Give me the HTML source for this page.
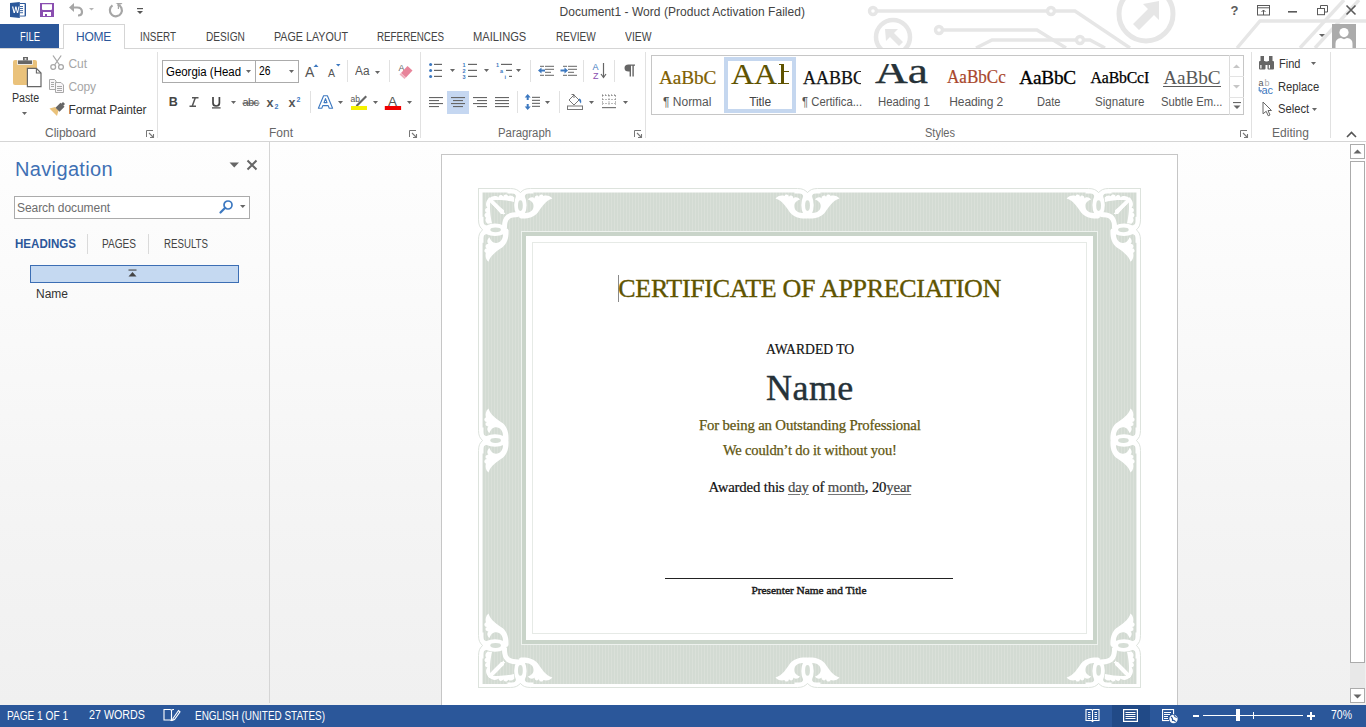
<!DOCTYPE html>
<html><head><meta charset="utf-8"><style>
html,body{margin:0;padding:0;}
body{width:1366px;height:727px;position:relative;overflow:hidden;background:#fff;font-family:"Liberation Sans", sans-serif;}
.t{position:absolute;line-height:1;white-space:nowrap;}
svg{overflow:visible}
</style></head><body>
<div style="position:absolute;left:0px;top:142px;width:1366px;height:563px;background:linear-gradient(#fefefe 0px,#f9f9f9 200px,#f4f4f4 380px,#f0f0f0 563px);"></div>
<div style="position:absolute;left:0px;top:141px;width:1366px;height:1px;background:#d5d5d5;"></div>
<div style="position:absolute;left:269px;top:142px;width:1px;height:561px;background:#d5d5d5;"></div>
<div style="position:absolute;left:441px;top:154px;width:737px;height:560px;background:#fff;border:1px solid #c6c6c6;box-sizing:border-box;"></div>
<svg style="position:absolute;left:0px;top:0px;" width="1366" height="727" viewBox="0 0 1366 727"><defs><pattern id="stripe" width="3" height="10" patternUnits="userSpaceOnUse"><rect width="3" height="10" fill="#d3dbd3"/><rect x="2" width="1" height="10" fill="#dae0d9"/></pattern></defs>
<rect x="478.5" y="188.5" width="662" height="499" fill="#fff" stroke="#dde3dd" stroke-width="1"/>
<rect x="482.5" y="192.5" width="654" height="491.5" fill="url(#stripe)"/>
<rect x="521" y="231" width="577" height="414" fill="#eef2ee"/>
<rect x="522" y="232" width="575" height="412" fill="#c9d4c9"/>
<rect x="526" y="236" width="567" height="404" fill="#fff"/>
<rect x="532.5" y="242.5" width="554" height="391" fill="none" stroke="#e6eae6" stroke-width="1"/>
<path transform="matrix(1,0,0,1,482.5,192.5)" d="M 36 22 C 27 22 21.5 24 22 36" fill="none" stroke="#fff" stroke-width="5"/><path transform="matrix(-1,0,0,1,1136.5,192.5)" d="M 36 22 C 27 22 21.5 24 22 36" fill="none" stroke="#fff" stroke-width="5"/><path transform="matrix(1,0,0,-1,482.5,684)" d="M 36 22 C 27 22 21.5 24 22 36" fill="none" stroke="#fff" stroke-width="5"/><path transform="matrix(-1,0,0,-1,1136.5,684)" d="M 36 22 C 27 22 21.5 24 22 36" fill="none" stroke="#fff" stroke-width="5"/><g transform="matrix(1,0,0,1,520.4,193)"><rect x="-13" y="-5" width="26" height="5.5" fill="#fff"/><path d="M -14 -4.5 L -10 -4.5 Q -3 -4.5 0 -0.3 Q 3 -4.5 10 -4.5 L 14 -4.5" fill="none" stroke="#dde3dd" stroke-width="1"/><path d="M -6 4.5 C -8 2.3 -10.5 1.8 -12 3.3 C -13.5 0.9 -16.5 0.9 -17 3.8 C -18.5 1.3 -21.5 1.6 -22 4.5 C -24 2.2 -28.5 2.5 -32.5 6.5 C -30.5 9.5 -24.5 14.5 -19.5 21 L -15 21 C -19 15.5 -23.5 10.5 -27.5 7.3 C -22 6.8 -14 7.2 -6.5 9 Z" fill="#fff"/><path d="M -32 5.5 C -30 2.8 -26 2 -23 3 C -22.5 0.8 -19 0.6 -18.5 4 C -17.8 1.8 -14.2 2 -14 5.5 C -13 3.8 -9.5 3.8 -7.5 6.5 C -10.8 7.8 -13.2 9.5 -13.2 13 C -13.2 17.5 -9.5 19.8 -5 20 L 0 20 L 0 25.5 C -7 26 -13.5 24.5 -17.5 19.5 C -21 14.5 -25 7.5 -32 5.5 Z" fill="#fff" transform="scale(-1,1)"/><rect x="-1" y="18" width="2" height="7" fill="#fff"/><ellipse cx="0" cy="12" rx="6.2" ry="12" fill="#fff"/><ellipse cx="0" cy="12.6" rx="2.4" ry="5.3" fill="#d6ded6"/><path d="M -9 0 Q -5 0 -4 4 L 4 4 Q 5 0 9 0 Z" fill="#fff"/></g><g transform="matrix(1,0,0,1,807.5,193)"><rect x="-13" y="-5" width="26" height="5.5" fill="#fff"/><path d="M -14 -4.5 L -10 -4.5 Q -3 -4.5 0 -0.3 Q 3 -4.5 10 -4.5 L 14 -4.5" fill="none" stroke="#dde3dd" stroke-width="1"/><path d="M -32 5.5 C -30 2.8 -26 2 -23 3 C -22.5 0.8 -19 0.6 -18.5 4 C -17.8 1.8 -14.2 2 -14 5.5 C -13 3.8 -9.5 3.8 -7.5 6.5 C -10.8 7.8 -13.2 9.5 -13.2 13 C -13.2 17.5 -9.5 19.8 -5 20 L 0 20 L 0 25.5 C -7 26 -13.5 24.5 -17.5 19.5 C -21 14.5 -25 7.5 -32 5.5 Z" fill="#fff"/><path d="M -32 5.5 C -30 2.8 -26 2 -23 3 C -22.5 0.8 -19 0.6 -18.5 4 C -17.8 1.8 -14.2 2 -14 5.5 C -13 3.8 -9.5 3.8 -7.5 6.5 C -10.8 7.8 -13.2 9.5 -13.2 13 C -13.2 17.5 -9.5 19.8 -5 20 L 0 20 L 0 25.5 C -7 26 -13.5 24.5 -17.5 19.5 C -21 14.5 -25 7.5 -32 5.5 Z" fill="#fff" transform="scale(-1,1)"/><rect x="-1" y="18" width="2" height="7" fill="#fff"/><ellipse cx="0" cy="12" rx="6.2" ry="12" fill="#fff"/><ellipse cx="0" cy="12.6" rx="2.4" ry="5.3" fill="#d6ded6"/><path d="M -9 0 Q -5 0 -4 4 L 4 4 Q 5 0 9 0 Z" fill="#fff"/></g><g transform="matrix(1,0,0,1,1098.6,193)"><rect x="-13" y="-5" width="26" height="5.5" fill="#fff"/><path d="M -14 -4.5 L -10 -4.5 Q -3 -4.5 0 -0.3 Q 3 -4.5 10 -4.5 L 14 -4.5" fill="none" stroke="#dde3dd" stroke-width="1"/><path d="M -32 5.5 C -30 2.8 -26 2 -23 3 C -22.5 0.8 -19 0.6 -18.5 4 C -17.8 1.8 -14.2 2 -14 5.5 C -13 3.8 -9.5 3.8 -7.5 6.5 C -10.8 7.8 -13.2 9.5 -13.2 13 C -13.2 17.5 -9.5 19.8 -5 20 L 0 20 L 0 25.5 C -7 26 -13.5 24.5 -17.5 19.5 C -21 14.5 -25 7.5 -32 5.5 Z" fill="#fff"/><path d="M -6 4.5 C -8 2.3 -10.5 1.8 -12 3.3 C -13.5 0.9 -16.5 0.9 -17 3.8 C -18.5 1.3 -21.5 1.6 -22 4.5 C -24 2.2 -28.5 2.5 -32.5 6.5 C -30.5 9.5 -24.5 14.5 -19.5 21 L -15 21 C -19 15.5 -23.5 10.5 -27.5 7.3 C -22 6.8 -14 7.2 -6.5 9 Z" fill="#fff" transform="scale(-1,1)"/><rect x="-1" y="18" width="2" height="7" fill="#fff"/><ellipse cx="0" cy="12" rx="6.2" ry="12" fill="#fff"/><ellipse cx="0" cy="12.6" rx="2.4" ry="5.3" fill="#d6ded6"/><path d="M -9 0 Q -5 0 -4 4 L 4 4 Q 5 0 9 0 Z" fill="#fff"/></g><g transform="matrix(1,0,0,-1,520.4,683)"><rect x="-13" y="-5" width="26" height="5.5" fill="#fff"/><path d="M -14 -4.5 L -10 -4.5 Q -3 -4.5 0 -0.3 Q 3 -4.5 10 -4.5 L 14 -4.5" fill="none" stroke="#dde3dd" stroke-width="1"/><path d="M -6 4.5 C -8 2.3 -10.5 1.8 -12 3.3 C -13.5 0.9 -16.5 0.9 -17 3.8 C -18.5 1.3 -21.5 1.6 -22 4.5 C -24 2.2 -28.5 2.5 -32.5 6.5 C -30.5 9.5 -24.5 14.5 -19.5 21 L -15 21 C -19 15.5 -23.5 10.5 -27.5 7.3 C -22 6.8 -14 7.2 -6.5 9 Z" fill="#fff"/><path d="M -32 5.5 C -30 2.8 -26 2 -23 3 C -22.5 0.8 -19 0.6 -18.5 4 C -17.8 1.8 -14.2 2 -14 5.5 C -13 3.8 -9.5 3.8 -7.5 6.5 C -10.8 7.8 -13.2 9.5 -13.2 13 C -13.2 17.5 -9.5 19.8 -5 20 L 0 20 L 0 25.5 C -7 26 -13.5 24.5 -17.5 19.5 C -21 14.5 -25 7.5 -32 5.5 Z" fill="#fff" transform="scale(-1,1)"/><rect x="-1" y="18" width="2" height="7" fill="#fff"/><ellipse cx="0" cy="12" rx="6.2" ry="12" fill="#fff"/><ellipse cx="0" cy="12.6" rx="2.4" ry="5.3" fill="#d6ded6"/><path d="M -9 0 Q -5 0 -4 4 L 4 4 Q 5 0 9 0 Z" fill="#fff"/></g><g transform="matrix(1,0,0,-1,807.5,683)"><rect x="-13" y="-5" width="26" height="5.5" fill="#fff"/><path d="M -14 -4.5 L -10 -4.5 Q -3 -4.5 0 -0.3 Q 3 -4.5 10 -4.5 L 14 -4.5" fill="none" stroke="#dde3dd" stroke-width="1"/><path d="M -32 5.5 C -30 2.8 -26 2 -23 3 C -22.5 0.8 -19 0.6 -18.5 4 C -17.8 1.8 -14.2 2 -14 5.5 C -13 3.8 -9.5 3.8 -7.5 6.5 C -10.8 7.8 -13.2 9.5 -13.2 13 C -13.2 17.5 -9.5 19.8 -5 20 L 0 20 L 0 25.5 C -7 26 -13.5 24.5 -17.5 19.5 C -21 14.5 -25 7.5 -32 5.5 Z" fill="#fff"/><path d="M -32 5.5 C -30 2.8 -26 2 -23 3 C -22.5 0.8 -19 0.6 -18.5 4 C -17.8 1.8 -14.2 2 -14 5.5 C -13 3.8 -9.5 3.8 -7.5 6.5 C -10.8 7.8 -13.2 9.5 -13.2 13 C -13.2 17.5 -9.5 19.8 -5 20 L 0 20 L 0 25.5 C -7 26 -13.5 24.5 -17.5 19.5 C -21 14.5 -25 7.5 -32 5.5 Z" fill="#fff" transform="scale(-1,1)"/><rect x="-1" y="18" width="2" height="7" fill="#fff"/><ellipse cx="0" cy="12" rx="6.2" ry="12" fill="#fff"/><ellipse cx="0" cy="12.6" rx="2.4" ry="5.3" fill="#d6ded6"/><path d="M -9 0 Q -5 0 -4 4 L 4 4 Q 5 0 9 0 Z" fill="#fff"/></g><g transform="matrix(1,0,0,-1,1098.6,683)"><rect x="-13" y="-5" width="26" height="5.5" fill="#fff"/><path d="M -14 -4.5 L -10 -4.5 Q -3 -4.5 0 -0.3 Q 3 -4.5 10 -4.5 L 14 -4.5" fill="none" stroke="#dde3dd" stroke-width="1"/><path d="M -32 5.5 C -30 2.8 -26 2 -23 3 C -22.5 0.8 -19 0.6 -18.5 4 C -17.8 1.8 -14.2 2 -14 5.5 C -13 3.8 -9.5 3.8 -7.5 6.5 C -10.8 7.8 -13.2 9.5 -13.2 13 C -13.2 17.5 -9.5 19.8 -5 20 L 0 20 L 0 25.5 C -7 26 -13.5 24.5 -17.5 19.5 C -21 14.5 -25 7.5 -32 5.5 Z" fill="#fff"/><path d="M -6 4.5 C -8 2.3 -10.5 1.8 -12 3.3 C -13.5 0.9 -16.5 0.9 -17 3.8 C -18.5 1.3 -21.5 1.6 -22 4.5 C -24 2.2 -28.5 2.5 -32.5 6.5 C -30.5 9.5 -24.5 14.5 -19.5 21 L -15 21 C -19 15.5 -23.5 10.5 -27.5 7.3 C -22 6.8 -14 7.2 -6.5 9 Z" fill="#fff" transform="scale(-1,1)"/><rect x="-1" y="18" width="2" height="7" fill="#fff"/><ellipse cx="0" cy="12" rx="6.2" ry="12" fill="#fff"/><ellipse cx="0" cy="12.6" rx="2.4" ry="5.3" fill="#d6ded6"/><path d="M -9 0 Q -5 0 -4 4 L 4 4 Q 5 0 9 0 Z" fill="#fff"/></g><g transform="matrix(0,1,1,0,483,229.8)"><rect x="-13" y="-5" width="26" height="5.5" fill="#fff"/><path d="M -14 -4.5 L -10 -4.5 Q -3 -4.5 0 -0.3 Q 3 -4.5 10 -4.5 L 14 -4.5" fill="none" stroke="#dde3dd" stroke-width="1"/><path d="M -6 4.5 C -8 2.3 -10.5 1.8 -12 3.3 C -13.5 0.9 -16.5 0.9 -17 3.8 C -18.5 1.3 -21.5 1.6 -22 4.5 C -24 2.2 -28.5 2.5 -32.5 6.5 C -30.5 9.5 -24.5 14.5 -19.5 21 L -15 21 C -19 15.5 -23.5 10.5 -27.5 7.3 C -22 6.8 -14 7.2 -6.5 9 Z" fill="#fff"/><path d="M -32 5.5 C -30 2.8 -26 2 -23 3 C -22.5 0.8 -19 0.6 -18.5 4 C -17.8 1.8 -14.2 2 -14 5.5 C -13 3.8 -9.5 3.8 -7.5 6.5 C -10.8 7.8 -13.2 9.5 -13.2 13 C -13.2 17.5 -9.5 19.8 -5 20 L 0 20 L 0 25.5 C -7 26 -13.5 24.5 -17.5 19.5 C -21 14.5 -25 7.5 -32 5.5 Z" fill="#fff" transform="scale(-1,1)"/><rect x="-1" y="18" width="2" height="7" fill="#fff"/><ellipse cx="0" cy="12" rx="6.2" ry="12" fill="#fff"/><ellipse cx="0" cy="12.6" rx="2.4" ry="5.3" fill="#d6ded6"/><path d="M -9 0 Q -5 0 -4 4 L 4 4 Q 5 0 9 0 Z" fill="#fff"/></g><g transform="matrix(0,1,1,0,483,440.5)"><rect x="-13" y="-5" width="26" height="5.5" fill="#fff"/><path d="M -14 -4.5 L -10 -4.5 Q -3 -4.5 0 -0.3 Q 3 -4.5 10 -4.5 L 14 -4.5" fill="none" stroke="#dde3dd" stroke-width="1"/><path d="M -32 5.5 C -30 2.8 -26 2 -23 3 C -22.5 0.8 -19 0.6 -18.5 4 C -17.8 1.8 -14.2 2 -14 5.5 C -13 3.8 -9.5 3.8 -7.5 6.5 C -10.8 7.8 -13.2 9.5 -13.2 13 C -13.2 17.5 -9.5 19.8 -5 20 L 0 20 L 0 25.5 C -7 26 -13.5 24.5 -17.5 19.5 C -21 14.5 -25 7.5 -32 5.5 Z" fill="#fff"/><path d="M -32 5.5 C -30 2.8 -26 2 -23 3 C -22.5 0.8 -19 0.6 -18.5 4 C -17.8 1.8 -14.2 2 -14 5.5 C -13 3.8 -9.5 3.8 -7.5 6.5 C -10.8 7.8 -13.2 9.5 -13.2 13 C -13.2 17.5 -9.5 19.8 -5 20 L 0 20 L 0 25.5 C -7 26 -13.5 24.5 -17.5 19.5 C -21 14.5 -25 7.5 -32 5.5 Z" fill="#fff" transform="scale(-1,1)"/><rect x="-1" y="18" width="2" height="7" fill="#fff"/><ellipse cx="0" cy="12" rx="6.2" ry="12" fill="#fff"/><ellipse cx="0" cy="12.6" rx="2.4" ry="5.3" fill="#d6ded6"/><path d="M -9 0 Q -5 0 -4 4 L 4 4 Q 5 0 9 0 Z" fill="#fff"/></g><g transform="matrix(0,1,1,0,483,645.5)"><rect x="-13" y="-5" width="26" height="5.5" fill="#fff"/><path d="M -14 -4.5 L -10 -4.5 Q -3 -4.5 0 -0.3 Q 3 -4.5 10 -4.5 L 14 -4.5" fill="none" stroke="#dde3dd" stroke-width="1"/><path d="M -32 5.5 C -30 2.8 -26 2 -23 3 C -22.5 0.8 -19 0.6 -18.5 4 C -17.8 1.8 -14.2 2 -14 5.5 C -13 3.8 -9.5 3.8 -7.5 6.5 C -10.8 7.8 -13.2 9.5 -13.2 13 C -13.2 17.5 -9.5 19.8 -5 20 L 0 20 L 0 25.5 C -7 26 -13.5 24.5 -17.5 19.5 C -21 14.5 -25 7.5 -32 5.5 Z" fill="#fff"/><path d="M -6 4.5 C -8 2.3 -10.5 1.8 -12 3.3 C -13.5 0.9 -16.5 0.9 -17 3.8 C -18.5 1.3 -21.5 1.6 -22 4.5 C -24 2.2 -28.5 2.5 -32.5 6.5 C -30.5 9.5 -24.5 14.5 -19.5 21 L -15 21 C -19 15.5 -23.5 10.5 -27.5 7.3 C -22 6.8 -14 7.2 -6.5 9 Z" fill="#fff" transform="scale(-1,1)"/><rect x="-1" y="18" width="2" height="7" fill="#fff"/><ellipse cx="0" cy="12" rx="6.2" ry="12" fill="#fff"/><ellipse cx="0" cy="12.6" rx="2.4" ry="5.3" fill="#d6ded6"/><path d="M -9 0 Q -5 0 -4 4 L 4 4 Q 5 0 9 0 Z" fill="#fff"/></g><g transform="matrix(0,1,-1,0,1136,229.8)"><rect x="-13" y="-5" width="26" height="5.5" fill="#fff"/><path d="M -14 -4.5 L -10 -4.5 Q -3 -4.5 0 -0.3 Q 3 -4.5 10 -4.5 L 14 -4.5" fill="none" stroke="#dde3dd" stroke-width="1"/><path d="M -6 4.5 C -8 2.3 -10.5 1.8 -12 3.3 C -13.5 0.9 -16.5 0.9 -17 3.8 C -18.5 1.3 -21.5 1.6 -22 4.5 C -24 2.2 -28.5 2.5 -32.5 6.5 C -30.5 9.5 -24.5 14.5 -19.5 21 L -15 21 C -19 15.5 -23.5 10.5 -27.5 7.3 C -22 6.8 -14 7.2 -6.5 9 Z" fill="#fff"/><path d="M -32 5.5 C -30 2.8 -26 2 -23 3 C -22.5 0.8 -19 0.6 -18.5 4 C -17.8 1.8 -14.2 2 -14 5.5 C -13 3.8 -9.5 3.8 -7.5 6.5 C -10.8 7.8 -13.2 9.5 -13.2 13 C -13.2 17.5 -9.5 19.8 -5 20 L 0 20 L 0 25.5 C -7 26 -13.5 24.5 -17.5 19.5 C -21 14.5 -25 7.5 -32 5.5 Z" fill="#fff" transform="scale(-1,1)"/><rect x="-1" y="18" width="2" height="7" fill="#fff"/><ellipse cx="0" cy="12" rx="6.2" ry="12" fill="#fff"/><ellipse cx="0" cy="12.6" rx="2.4" ry="5.3" fill="#d6ded6"/><path d="M -9 0 Q -5 0 -4 4 L 4 4 Q 5 0 9 0 Z" fill="#fff"/></g><g transform="matrix(0,1,-1,0,1136,440.5)"><rect x="-13" y="-5" width="26" height="5.5" fill="#fff"/><path d="M -14 -4.5 L -10 -4.5 Q -3 -4.5 0 -0.3 Q 3 -4.5 10 -4.5 L 14 -4.5" fill="none" stroke="#dde3dd" stroke-width="1"/><path d="M -32 5.5 C -30 2.8 -26 2 -23 3 C -22.5 0.8 -19 0.6 -18.5 4 C -17.8 1.8 -14.2 2 -14 5.5 C -13 3.8 -9.5 3.8 -7.5 6.5 C -10.8 7.8 -13.2 9.5 -13.2 13 C -13.2 17.5 -9.5 19.8 -5 20 L 0 20 L 0 25.5 C -7 26 -13.5 24.5 -17.5 19.5 C -21 14.5 -25 7.5 -32 5.5 Z" fill="#fff"/><path d="M -32 5.5 C -30 2.8 -26 2 -23 3 C -22.5 0.8 -19 0.6 -18.5 4 C -17.8 1.8 -14.2 2 -14 5.5 C -13 3.8 -9.5 3.8 -7.5 6.5 C -10.8 7.8 -13.2 9.5 -13.2 13 C -13.2 17.5 -9.5 19.8 -5 20 L 0 20 L 0 25.5 C -7 26 -13.5 24.5 -17.5 19.5 C -21 14.5 -25 7.5 -32 5.5 Z" fill="#fff" transform="scale(-1,1)"/><rect x="-1" y="18" width="2" height="7" fill="#fff"/><ellipse cx="0" cy="12" rx="6.2" ry="12" fill="#fff"/><ellipse cx="0" cy="12.6" rx="2.4" ry="5.3" fill="#d6ded6"/><path d="M -9 0 Q -5 0 -4 4 L 4 4 Q 5 0 9 0 Z" fill="#fff"/></g><g transform="matrix(0,1,-1,0,1136,645.5)"><rect x="-13" y="-5" width="26" height="5.5" fill="#fff"/><path d="M -14 -4.5 L -10 -4.5 Q -3 -4.5 0 -0.3 Q 3 -4.5 10 -4.5 L 14 -4.5" fill="none" stroke="#dde3dd" stroke-width="1"/><path d="M -32 5.5 C -30 2.8 -26 2 -23 3 C -22.5 0.8 -19 0.6 -18.5 4 C -17.8 1.8 -14.2 2 -14 5.5 C -13 3.8 -9.5 3.8 -7.5 6.5 C -10.8 7.8 -13.2 9.5 -13.2 13 C -13.2 17.5 -9.5 19.8 -5 20 L 0 20 L 0 25.5 C -7 26 -13.5 24.5 -17.5 19.5 C -21 14.5 -25 7.5 -32 5.5 Z" fill="#fff"/><path d="M -6 4.5 C -8 2.3 -10.5 1.8 -12 3.3 C -13.5 0.9 -16.5 0.9 -17 3.8 C -18.5 1.3 -21.5 1.6 -22 4.5 C -24 2.2 -28.5 2.5 -32.5 6.5 C -30.5 9.5 -24.5 14.5 -19.5 21 L -15 21 C -19 15.5 -23.5 10.5 -27.5 7.3 C -22 6.8 -14 7.2 -6.5 9 Z" fill="#fff" transform="scale(-1,1)"/><rect x="-1" y="18" width="2" height="7" fill="#fff"/><ellipse cx="0" cy="12" rx="6.2" ry="12" fill="#fff"/><ellipse cx="0" cy="12.6" rx="2.4" ry="5.3" fill="#d6ded6"/><path d="M -9 0 Q -5 0 -4 4 L 4 4 Q 5 0 9 0 Z" fill="#fff"/></g></svg>
<div style="position:absolute;left:618px;top:275px;width:1px;height:27px;background:#8a8a8a;"></div>
<div class='t ' style='left:618.30px;top:276.03px;font-size:26.00px;color:#5f5400;font-family:"Liberation Serif", serif;letter-spacing:-0.321px;-webkit-text-stroke:0.35px #5f5400;'>CERTIFICATE OF APPRECIATION</div>
<div class='t ' style='left:765.60px;top:342.11px;font-size:14.20px;color:#111;font-family:"Liberation Serif", serif;transform:scaleX(0.9606);transform-origin:0 0;-webkit-text-stroke:0.2px #111;'>AWARDED TO</div>
<div class='t ' style='left:766.00px;top:369.85px;font-size:36.00px;color:#263238;font-family:"Liberation Serif", serif;letter-spacing:0.461px;-webkit-text-stroke:0.4px #263238;'>Name</div>
<div class='t ' style='left:699.00px;top:417.50px;font-size:14.80px;color:#615610;font-family:"Liberation Serif", serif;letter-spacing:-0.163px;-webkit-text-stroke:0.25px #615610;'>For being an Outstanding Professional</div>
<div class='t ' style='left:723.00px;top:443.16px;font-size:14.50px;color:#615610;font-family:"Liberation Serif", serif;letter-spacing:-0.163px;-webkit-text-stroke:0.25px #615610;'>We couldn’t do it without you!</div>
<div class='t' style='left:708.5px;top:480.00px;font-size:14.8px;font-family:"Liberation Serif", serif;color:#111;letter-spacing:-0.17px;-webkit-text-stroke:0.2px #111'>Awarded this <span style='color:#595959;text-decoration:underline;text-decoration-color:#777;text-underline-offset:2px'>day</span> of <span style='color:#595959;text-decoration:underline;text-decoration-color:#777;text-underline-offset:2px'>month</span>, 20<span style='color:#595959;text-decoration:underline;text-decoration-color:#777;text-underline-offset:2px'>year</span></div>
<div style="position:absolute;left:665px;top:578px;width:288px;height:1px;background:#222;"></div>
<div class='t ' style='left:751.50px;top:584.54px;font-size:11.30px;color:#1a1a1a;font-family:"Liberation Serif", serif;letter-spacing:0.019px;-webkit-text-stroke:0.45px #1a1a1a;'>Presenter Name and Title</div>
<div style="position:absolute;left:0px;top:705px;width:1366px;height:22px;background:#2b579a;"></div>
<svg style="position:absolute;left:860px;top:0px;overflow:hidden" width="506" height="48" viewBox="0 0 506 48"><g stroke="#e6e6e6" stroke-width="3.4" fill="none">
<circle cx="13" cy="11" r="3.5"/><line x1="16.5" y1="11" x2="187" y2="11"/><circle cx="191" cy="11" r="3.5"/>
<polyline points="194.5,11 215,11 270,48"/>
<circle cx="33" cy="37" r="17" stroke-width="4.5"/>
<circle cx="79" cy="30" r="3.5"/><polyline points="82.5,30 177,30 206,48"/>
<polyline points="116,48 132,40 216.5,40"/><circle cx="220" cy="40" r="3.5"/><polyline points="223.5,40 230,40 245,48"/>
<circle cx="286" cy="14" r="27" stroke-width="5"/>
<polyline points="377,48 400,21 506,21"/>
<line x1="440" y1="48" x2="484" y2="0"/><line x1="455" y1="48" x2="499" y2="0"/>
</g>
<g fill="#e6e6e6"><polygon points="25,29 38,29 34,33 43,42 39,46 30,37 26,41"/>
<polygon points="299,1 299,20 294,15 279,30 273,24 288,9 283,4"/></g></svg>
<div class='t ' style='left:559.50px;top:5.84px;font-size:12.00px;color:#444;font-family:"Liberation Sans", sans-serif;letter-spacing:0.037px;'>Document1 - Word (Product Activation Failed)</div>
<svg style="position:absolute;left:10px;top:2px;" width="16" height="16" viewBox="0 0 16 16"><path d="M9.8 1 H15 a1 1 0 0 1 1 1 V13.6 a1 1 0 0 1 -1 1 H9.8 Z" fill="#2b579a"/><rect x="10" y="2" width="4.6" height="11.6" fill="#fff"/><g fill="#2b579a"><rect x="10" y="4" width="3" height="0.9"/><rect x="10" y="6.1" width="3" height="0.9"/><rect x="10" y="8.2" width="3" height="0.9"/><rect x="10" y="10.3" width="3" height="0.9"/></g><path d="M0 1 L9.8 0 V16 L0 15 Z" fill="#2b579a"/><path d="M2 4.5 H3.3 L4.3 9.5 L5.3 4.5 H6.5 L7.5 9.5 L8.4 4.5 H9.5 L8.1 11 H6.9 L5.9 6.5 L4.9 11 H3.6 Z" fill="#fff"/></svg>
<svg style="position:absolute;left:40px;top:3px;" width="14" height="14" viewBox="0 0 14 14"><path d="M0 0 H14 V14 H0 Z M2 1.2 V6 Q2 7 3 7 H11 Q12 7 12 6 V1.2 Z M3 9 V13 H5 V11 H7 V13 H11 V9 Z" fill="#8a4eb0" fill-rule="evenodd"/></svg>
<svg style="position:absolute;left:68px;top:2px;" width="28" height="16" viewBox="0 0 28 16"><path d="M5.5 5.5 H9 Q14 5.5 14 10 Q14 13.5 10 13.5" stroke="#a6a6a6" stroke-width="2.2" fill="none"/><path d="M1 5.5 L6 1 V10 Z" fill="#a6a6a6"/><path d="M21 6 H26 L23.5 8.5 Z" fill="#b5b5b5"/></svg>
<svg style="position:absolute;left:108px;top:2px;" width="16" height="16" viewBox="0 0 16 16"><path d="M9.5 2.5 A6 6 0 1 1 4.5 3.3" stroke="#a6a6a6" stroke-width="2.2" fill="none"/><path d="M7.5 1 H14.5 L13 2.5 H11 V7 H9.8 V2.2 Z" fill="#a6a6a6"/></svg>
<svg style="position:absolute;left:136px;top:7px;" width="8" height="8" viewBox="0 0 8 8"><rect x="1" y="1" width="6" height="1.2" fill="#555"/><path d="M1 4 H7 L4 7 Z" fill="#555"/></svg>
<svg style="position:absolute;left:1228px;top:3px;" width="132" height="14" viewBox="0 0 132 14"><text x="6.5" y="12" font-family="Liberation Sans" font-weight="bold" font-size="13" fill="#5a5a5a" text-anchor="middle">?</text>
<rect x="29.5" y="2.5" width="12" height="9.5" fill="none" stroke="#5a5a5a" stroke-width="1"/><line x1="29.5" y1="4.8" x2="41.5" y2="4.8" stroke="#5a5a5a" stroke-width="1"/><path d="M35.5 7 V12 M33.5 9 L35.5 7 L37.5 9" stroke="#5a5a5a" stroke-width="1" fill="none"/>
<rect x="60" y="8" width="9" height="1.6" fill="#5a5a5a"/>
<path d="M92.5 5.5 V2.5 H99.5 V9 H96.5" stroke="#5a5a5a" stroke-width="1" fill="none"/><rect x="89.5" y="5.5" width="7" height="6.2" fill="none" stroke="#5a5a5a" stroke-width="1"/>
<path d="M118.5 2.5 L127.5 11.5 M127.5 2.5 L118.5 11.5" stroke="#5a5a5a" stroke-width="1.6"/></svg>
<div style="position:absolute;left:0px;top:48px;width:1366px;height:1px;background:#d5d5d5;"></div>
<div style="position:absolute;left:0px;top:24px;width:59px;height:24px;background:#2b579a;"></div>
<div class='t ' style='left:20.00px;top:30.84px;font-size:12.00px;color:#fff;font-family:"Liberation Sans", sans-serif;transform:scaleX(0.7892);transform-origin:0 0;'>FILE</div>
<div style="position:absolute;left:63px;top:24px;width:62px;height:25px;background:#fff;border:1px solid #d5d5d5;border-bottom:none;box-sizing:border-box;"></div>
<div class='t ' style='left:76.00px;top:30.84px;font-size:12.00px;color:#2b579a;font-family:"Liberation Sans", sans-serif;letter-spacing:-0.250px;'>HOME</div>
<div class='t ' style='left:140.00px;top:30.84px;font-size:12.00px;color:#444;font-family:"Liberation Sans", sans-serif;transform:scaleX(0.8222);transform-origin:0 0;'>INSERT</div>
<div class='t ' style='left:205.50px;top:30.84px;font-size:12.00px;color:#444;font-family:"Liberation Sans", sans-serif;transform:scaleX(0.8455);transform-origin:0 0;'>DESIGN</div>
<div class='t ' style='left:274.00px;top:30.84px;font-size:12.00px;color:#444;font-family:"Liberation Sans", sans-serif;transform:scaleX(0.8925);transform-origin:0 0;'>PAGE LAYOUT</div>
<div class='t ' style='left:377.00px;top:30.84px;font-size:12.00px;color:#444;font-family:"Liberation Sans", sans-serif;transform:scaleX(0.8169);transform-origin:0 0;'>REFERENCES</div>
<div class='t ' style='left:473.40px;top:30.84px;font-size:12.00px;color:#444;font-family:"Liberation Sans", sans-serif;transform:scaleX(0.9294);transform-origin:0 0;'>MAILINGS</div>
<div class='t ' style='left:556.00px;top:30.84px;font-size:12.00px;color:#444;font-family:"Liberation Sans", sans-serif;transform:scaleX(0.8386);transform-origin:0 0;'>REVIEW</div>
<div class='t ' style='left:625.00px;top:30.84px;font-size:12.00px;color:#444;font-family:"Liberation Sans", sans-serif;transform:scaleX(0.8641);transform-origin:0 0;'>VIEW</div>
<div class='t ' style='left:45.00px;top:126.84px;font-size:12.00px;color:#666;font-family:"Liberation Sans", sans-serif;letter-spacing:-0.040px;'>Clipboard</div>
<div class='t ' style='left:269.00px;top:126.84px;font-size:12.00px;color:#666;font-family:"Liberation Sans", sans-serif;letter-spacing:-0.003px;'>Font</div>
<div class='t ' style='left:498.00px;top:126.84px;font-size:12.00px;color:#666;font-family:"Liberation Sans", sans-serif;transform:scaleX(0.9458);transform-origin:0 0;'>Paragraph</div>
<div class='t ' style='left:925.00px;top:126.84px;font-size:12.00px;color:#666;font-family:"Liberation Sans", sans-serif;transform:scaleX(0.9181);transform-origin:0 0;'>Styles</div>
<div class='t ' style='left:1272.00px;top:126.84px;font-size:12.00px;color:#666;font-family:"Liberation Sans", sans-serif;letter-spacing:0.044px;'>Editing</div>
<div style="position:absolute;left:157px;top:52px;width:1px;height:86px;background:#e1e1e1;"></div>
<div style="position:absolute;left:420px;top:52px;width:1px;height:86px;background:#e1e1e1;"></div>
<div style="position:absolute;left:645px;top:52px;width:1px;height:86px;background:#e1e1e1;"></div>
<div style="position:absolute;left:1251px;top:52px;width:1px;height:86px;background:#e1e1e1;"></div>
<div style="position:absolute;left:1330px;top:52px;width:1px;height:86px;background:#e1e1e1;"></div>
<div class='t ' style='left:15.00px;top:158.56px;font-size:20.00px;color:#4070b4;font-family:"Liberation Sans", sans-serif;letter-spacing:0.350px;'>Navigation</div>
<div style="position:absolute;left:14px;top:196px;width:236px;height:23px;background:#fff;border:1px solid #ababab;box-sizing:border-box;"></div>
<div class='t ' style='left:17.00px;top:201.84px;font-size:12.00px;color:#6d6d6d;font-family:"Liberation Sans", sans-serif;letter-spacing:-0.070px;'>Search document</div>
<div class='t ' style='left:15.00px;top:238.34px;font-size:12.00px;color:#2b579a;font-family:"Liberation Sans", sans-serif;font-weight:bold;transform:scaleX(0.9631);transform-origin:0 0;'>HEADINGS</div>
<div style="position:absolute;left:87px;top:234px;width:1px;height:20px;background:#dadada;"></div>
<div class='t ' style='left:102.00px;top:238.34px;font-size:12.00px;color:#444;font-family:"Liberation Sans", sans-serif;transform:scaleX(0.8404);transform-origin:0 0;'>PAGES</div>
<div style="position:absolute;left:148px;top:234px;width:1px;height:20px;background:#dadada;"></div>
<div class='t ' style='left:164.00px;top:238.34px;font-size:12.00px;color:#444;font-family:"Liberation Sans", sans-serif;transform:scaleX(0.8080);transform-origin:0 0;'>RESULTS</div>
<div style="position:absolute;left:30px;top:265px;width:209px;height:18px;background:#c5d9f1;border:1px solid #3c6eb4;box-sizing:border-box;"></div>
<div class='t ' style='left:36.00px;top:288.04px;font-size:12.00px;color:#333;font-family:"Liberation Sans", sans-serif;letter-spacing:-0.002px;'>Name</div>
<div class='t ' style='left:7.00px;top:709.84px;font-size:12.00px;color:#fff;font-family:"Liberation Sans", sans-serif;transform:scaleX(0.8417);transform-origin:0 0;'>PAGE 1 OF 1</div>
<div class='t ' style='left:89.00px;top:708.84px;font-size:12.00px;color:#fff;font-family:"Liberation Sans", sans-serif;transform:scaleX(0.8935);transform-origin:0 0;'>27 WORDS</div>
<div class='t ' style='left:195.00px;top:709.84px;font-size:12.00px;color:#fff;font-family:"Liberation Sans", sans-serif;transform:scaleX(0.8285);transform-origin:0 0;'>ENGLISH (UNITED STATES)</div>
<div class='t ' style='left:1331.00px;top:709.34px;font-size:12.00px;color:#fff;font-family:"Liberation Sans", sans-serif;transform:scaleX(0.8744);transform-origin:0 0;'>70%</div>
<svg style="position:absolute;left:12px;top:56px;" width="31" height="32" viewBox="0 0 31 32"><rect x="1" y="4" width="24" height="25" rx="2" fill="#eac27b"/>
<path d="M5.5 4 H20.5 V8.5 H5.5 Z" fill="#666" stroke="#fff" stroke-width="0.8"/>
<path d="M11 1 H16 V4.5 H11 Z" fill="#666"/><rect x="12.6" y="2.2" width="1.8" height="1.5" fill="#fff"/>
<path d="M15.4 12.4 H24.4 L29 17 V30.6 H15.4 Z" fill="#fff" stroke="#666" stroke-width="1.2"/>
<path d="M24.4 12.4 V17 H29" fill="none" stroke="#666" stroke-width="1.1"/></svg>
<div class='t ' style='left:11.90px;top:92.24px;font-size:12.00px;color:#333;font-family:"Liberation Sans", sans-serif;transform:scaleX(0.8864);transform-origin:0 0;'>Paste</div>
<svg style="position:absolute;left:22px;top:112px;" width="5" height="3" viewBox="0 0 5 3"><path d="M0 0 H5 L2.5 3 Z" fill="#666"/></svg>
<svg style="position:absolute;left:49px;top:54px;" width="17" height="17" viewBox="0 0 17 17"><g stroke="#a8a8a8" stroke-width="1.3" fill="none"><circle cx="4.2" cy="13" r="2.4"/><circle cx="12" cy="13" r="2.4"/>
<path d="M5.6 11 L12.2 1.5 M10.6 11 L4 1.5"/></g></svg>
<div class='t ' style='left:68.50px;top:57.54px;font-size:12.00px;color:#a6a6a6;font-family:"Liberation Sans", sans-serif;letter-spacing:-0.091px;'>Cut</div>
<svg style="position:absolute;left:49px;top:79px;" width="16" height="15" viewBox="0 0 16 15"><path d="M0.5 0.5 H5.5 L7 2 V10.5 H0.5 Z" fill="#f9f6f9" stroke="#a8a8a8" stroke-width="1"/>
<path d="M6.5 3.5 H12 L14.5 6 V13.5 H6.5 Z" fill="#f9f6f9" stroke="#a8a8a8" stroke-width="1"/>
<g fill="#a8a8a8"><rect x="2" y="3" width="3" height="1"/><rect x="2" y="5" width="3" height="1"/><rect x="2" y="7" width="3" height="1"/>
<rect x="8" y="7" width="5" height="1"/><rect x="8" y="9" width="5" height="1"/><rect x="8" y="11" width="5" height="1"/></g></svg>
<div class='t ' style='left:68.50px;top:80.94px;font-size:12.00px;color:#a6a6a6;font-family:"Liberation Sans", sans-serif;letter-spacing:-0.203px;'>Copy</div>
<svg style="position:absolute;left:49px;top:102px;" width="17" height="15" viewBox="0 0 17 15"><path d="M0.5 6.5 L6 5 L9.5 8.5 L8 14 Z" fill="#eac27b"/>
<path d="M5.5 4.5 L10.5 -0.5 L14.5 3.5 L9.5 8.5 Z" fill="#666" transform="translate(1,1.2)"/>
<path d="M12 1 L14 -1 L16 1 L14 3 Z" fill="#666" transform="translate(0,1)"/></svg>
<div class='t ' style='left:68.50px;top:103.64px;font-size:12.00px;color:#333;font-family:"Liberation Sans", sans-serif;letter-spacing:-0.097px;'>Format Painter</div>
<svg style="position:absolute;left:146px;top:130px;" width="8" height="8" viewBox="0 0 8 8"><path d="M0.5 7 V0.5 H7" stroke="#777" stroke-width="1" fill="none"/><path d="M3 3 L7.5 7.5 M7.5 4 V7.5 H4" stroke="#777" stroke-width="1.1" fill="none"/></svg>
<div style="position:absolute;left:162px;top:60px;width:137px;height:23px;background:#fff;border:1px solid #ababab;box-sizing:border-box;"></div>
<div style="position:absolute;left:255px;top:61px;width:1px;height:21px;background:#ababab;"></div>
<div class='t ' style='left:165.50px;top:65.64px;font-size:12.00px;color:#000;font-family:"Liberation Sans", sans-serif;transform:scaleX(0.9529);transform-origin:0 0;'>Georgia (Head</div>
<svg style="position:absolute;left:246px;top:70px;" width="5" height="3" viewBox="0 0 5 3"><path d="M0 0 H5 L2.5 3 Z" fill="#666"/></svg>
<div class='t ' style='left:259.20px;top:65.34px;font-size:12.00px;color:#000;font-family:"Liberation Sans", sans-serif;transform:scaleX(0.8616);transform-origin:0 0;'>26</div>
<svg style="position:absolute;left:289px;top:70px;" width="5" height="3" viewBox="0 0 5 3"><path d="M0 0 H5 L2.5 3 Z" fill="#666"/></svg>
<svg style="position:absolute;left:304px;top:63px;" width="40" height="15" viewBox="0 0 40 15"><text x="1" y="13.6" font-family="Liberation Sans" font-size="14" fill="#555">A</text>
<path d="M9.5 4 L12 1.2 L14.5 4 Z" fill="#3c78c0"/>
<text x="24" y="13.6" font-family="Liberation Sans" font-size="10.5" fill="#555">A</text>
<path d="M32 1 H36.5 L34.25 3.6 Z" fill="#3c78c0"/></svg>
<div style="position:absolute;left:347px;top:60px;width:1px;height:22px;background:#e1e1e1;"></div>
<div class='t ' style='left:355.20px;top:64.91px;font-size:12.50px;color:#555;font-family:"Liberation Sans", sans-serif;transform:scaleX(0.9484);transform-origin:0 0;'>Aa</div>
<svg style="position:absolute;left:375px;top:71px;" width="5" height="3" viewBox="0 0 5 3"><path d="M0 0 H5 L2.5 3 Z" fill="#666"/></svg>
<div style="position:absolute;left:389px;top:60px;width:1px;height:22px;background:#e1e1e1;"></div>
<svg style="position:absolute;left:398px;top:63px;" width="16" height="16" viewBox="0 0 16 16"><text x="0.5" y="8" font-family="Liberation Sans" font-size="9" fill="#666">A</text>
<path d="M9.5 3 L14.5 7.5 L8 14.5 L3 10 Z" fill="#e8849a"/><path d="M3 10 L8 14.5 L6.5 16 L1.5 11.5 Z" fill="#f0b0be"/></svg>
<div class='t ' style='left:168.70px;top:96.41px;font-size:12.50px;color:#444;font-family:"Liberation Sans", sans-serif;font-weight:bold;'>B</div>
<svg style="position:absolute;left:189px;top:97px;" width="10" height="10" viewBox="0 0 10 10"><path d="M3 0.8 H9.5 M0.5 9.2 H7 M6.3 0.8 L3.2 9.2" stroke="#555" stroke-width="1.5" fill="none"/></svg>
<svg style="position:absolute;left:211px;top:97px;" width="11" height="12" viewBox="0 0 11 12"><path d="M2 0 V6 Q2 9 5.2 9 Q8.4 9 8.4 6 V0" stroke="#444" stroke-width="1.7" fill="none"/><rect x="1" y="10.3" width="8.6" height="1.2" fill="#444"/></svg>
<svg style="position:absolute;left:231px;top:101px;" width="5" height="3" viewBox="0 0 5 3"><path d="M0 0 H5 L2.5 3 Z" fill="#666"/></svg>
<svg style="position:absolute;left:242px;top:96px;" width="18" height="12" viewBox="0 0 18 12"><text x="0.5" y="10" font-family="Liberation Sans" font-size="11" fill="#555" letter-spacing="-0.6">abc</text><rect x="0.5" y="6.6" width="17" height="1" fill="#555"/></svg>
<svg style="position:absolute;left:266px;top:96px;" width="38" height="14" viewBox="0 0 38 14"><text x="0.5" y="11" font-family="Liberation Sans" font-weight="bold" font-size="12.5" fill="#555">x</text><text x="8.5" y="13" font-family="Liberation Sans" font-weight="bold" font-size="7" fill="#3c78c0">2</text>
<text x="22.5" y="11" font-family="Liberation Sans" font-weight="bold" font-size="12.5" fill="#555">x</text><text x="30.5" y="5.5" font-family="Liberation Sans" font-weight="bold" font-size="7" fill="#3c78c0">2</text></svg>
<div style="position:absolute;left:310px;top:91px;width:1px;height:22px;background:#e1e1e1;"></div>
<svg style="position:absolute;left:318px;top:95px;" width="16" height="14" viewBox="0 0 16 14"><path d="M5.6 0.8 H9.4 L14.6 13.2 H11.2 L10.2 10.6 H4.8 L3.8 13.2 H0.4 Z M6 7.6 H9 L7.5 3.6 Z" fill="#fff" stroke="#3c78c0" stroke-width="1.1" stroke-linejoin="round" fill-rule="evenodd"/></svg>
<svg style="position:absolute;left:338px;top:101px;" width="5" height="3" viewBox="0 0 5 3"><path d="M0 0 H5 L2.5 3 Z" fill="#666"/></svg>
<svg style="position:absolute;left:350px;top:94px;" width="18" height="17" viewBox="0 0 18 17"><text x="0.5" y="8" font-family="Liberation Sans" font-size="8.5" fill="#555">ab</text>
<path d="M15.5 1.5 L17 3 L8 12 L5.5 12.5 L6.5 10.5 Z" fill="#666"/>
<rect x="1" y="12" width="16" height="4" fill="#f5f100"/></svg>
<svg style="position:absolute;left:373px;top:101px;" width="5" height="3" viewBox="0 0 5 3"><path d="M0 0 H5 L2.5 3 Z" fill="#666"/></svg>
<svg style="position:absolute;left:384px;top:95px;" width="18" height="16" viewBox="0 0 18 16"><text x="4" y="10.5" font-family="Liberation Sans" font-size="13.5" fill="#555">A</text><rect x="0.8" y="11" width="16.3" height="4" fill="#f00000"/></svg>
<svg style="position:absolute;left:407px;top:101px;" width="5" height="3" viewBox="0 0 5 3"><path d="M0 0 H5 L2.5 3 Z" fill="#666"/></svg>
<svg style="position:absolute;left:409px;top:130px;" width="8" height="8" viewBox="0 0 8 8"><path d="M0.5 7 V0.5 H7" stroke="#777" stroke-width="1" fill="none"/><path d="M3 3 L7.5 7.5 M7.5 4 V7.5 H4" stroke="#777" stroke-width="1.1" fill="none"/></svg>
<svg style="position:absolute;left:427px;top:61px;" width="100" height="18" viewBox="0 0 100 18"><g fill="#3c78c0"><circle cx="3.6" cy="3.4" r="1.5"/><circle cx="3.6" cy="9.4" r="1.5"/><circle cx="3.6" cy="15.4" r="1.5"/></g>
<g fill="#666"><rect x="7" y="2.8" width="8" height="1.2"/><rect x="7" y="8.8" width="8" height="1.2"/><rect x="7" y="14.8" width="8" height="1.2"/>
<path d="M23 8 H28 L25.5 11 Z"/>
<rect x="41" y="2.8" width="9" height="1.2"/><rect x="41" y="8.8" width="9" height="1.2"/><rect x="41" y="14.8" width="9" height="1.2"/>
<path d="M57 8 H62 L59.5 11 Z"/>
<rect x="74" y="2.8" width="11" height="1.2"/><rect x="79" y="8.8" width="6" height="1.2"/><rect x="82" y="14.8" width="3" height="1.2"/>
<path d="M89 8 H94 L91.5 11 Z"/></g>
<g fill="#3c78c0" font-family="Liberation Sans" font-weight="bold" font-size="5.5"><text x="35.5" y="5.5">1</text><text x="35.5" y="11.5">2</text><text x="35.5" y="17.5">3</text>
<text x="69" y="5.5">1</text><text x="73" y="11.5">a</text><text x="77.5" y="17.5">i</text></g></svg>
<div style="position:absolute;left:530px;top:60px;width:1px;height:22px;background:#e1e1e1;"></div>
<svg style="position:absolute;left:537px;top:64px;" width="40" height="13" viewBox="0 0 40 13"><g fill="#666"><rect x="3" y="1.8" width="4" height="1"/><rect x="8" y="1.8" width="9" height="1"/>
<rect x="8" y="4.8" width="9" height="1"/><rect x="8" y="7.8" width="6" height="1"/><rect x="3" y="10.8" width="4" height="1"/><rect x="8" y="10.8" width="9" height="1"/>
<rect x="26" y="1.8" width="4" height="1"/><rect x="31" y="1.8" width="9" height="1"/>
<rect x="31" y="4.8" width="9" height="1"/><rect x="31" y="7.8" width="6" height="1"/><rect x="26" y="10.8" width="4" height="1"/><rect x="31" y="10.8" width="9" height="1"/></g>
<g fill="#3c78c0"><path d="M1 6.5 L4.5 3.5 V5.6 H8 V7.4 H4.5 V9.5 Z"/><path d="M31 6.5 L27.5 3.5 V5.6 H23.5 V7.4 H27.5 V9.5 Z"/></g></svg>
<div style="position:absolute;left:583px;top:60px;width:1px;height:22px;background:#e1e1e1;"></div>
<svg style="position:absolute;left:592px;top:62px;" width="16" height="17" viewBox="0 0 16 17"><text x="0.5" y="8" font-family="Liberation Sans" font-size="9" fill="#3c78c0">A</text><text x="1" y="16.5" font-family="Liberation Sans" font-size="9" fill="#8a4eb0">Z</text>
<path d="M11.5 1 V15" stroke="#666" stroke-width="1.2"/><path d="M9 12 L11.5 15.5 L14 12" stroke="#666" stroke-width="1.2" fill="none"/></svg>
<div style="position:absolute;left:614px;top:60px;width:1px;height:22px;background:#e1e1e1;"></div>
<svg style="position:absolute;left:624px;top:64px;" width="12" height="13" viewBox="0 0 12 13"><path d="M4.5 0.5 H11 V1.8 H9.8 V12.5 H8.4 V1.8 H7 V12.5 H5.6 V7.5 H4.5 Q0.5 7.5 0.5 4 Q0.5 0.5 4.5 0.5 Z" fill="#666"/></svg>
<div style="position:absolute;left:447px;top:91px;width:22px;height:23px;background:#c5d7f1;"></div>
<svg style="position:absolute;left:429px;top:91px;" width="14" height="20" viewBox="0 0 14 20"><rect x="0" y="6" width="14" height="1.1" fill="#666"/><rect x="0" y="9" width="10" height="1.1" fill="#666"/><rect x="0" y="12" width="14" height="1.1" fill="#666"/><rect x="0" y="15" width="10" height="1.1" fill="#666"/></svg>
<svg style="position:absolute;left:451px;top:91px;" width="14" height="20" viewBox="0 0 14 20"><rect x="0.0" y="6" width="14" height="1.1" fill="#666"/><rect x="2.0" y="9" width="10" height="1.1" fill="#666"/><rect x="0.0" y="12" width="14" height="1.1" fill="#666"/><rect x="2.0" y="15" width="10" height="1.1" fill="#666"/></svg>
<svg style="position:absolute;left:473px;top:91px;" width="14" height="20" viewBox="0 0 14 20"><rect x="0" y="6" width="14" height="1.1" fill="#666"/><rect x="4" y="9" width="10" height="1.1" fill="#666"/><rect x="0" y="12" width="14" height="1.1" fill="#666"/><rect x="4" y="15" width="10" height="1.1" fill="#666"/></svg>
<svg style="position:absolute;left:495px;top:91px;" width="14" height="20" viewBox="0 0 14 20"><rect x="0" y="6" width="14" height="1.1" fill="#666"/><rect x="0" y="9" width="14" height="1.1" fill="#666"/><rect x="0" y="12" width="14" height="1.1" fill="#666"/><rect x="0" y="15" width="14" height="1.1" fill="#666"/></svg>
<div style="position:absolute;left:517px;top:91px;width:1px;height:22px;background:#e1e1e1;"></div>
<svg style="position:absolute;left:525px;top:93px;" width="16" height="18" viewBox="0 0 16 18"><g fill="#3c78c0"><path d="M3 1 L6 4.5 H4 V7 H2 V4.5 H0 Z" transform="translate(-0.3,0)"/><path d="M3 17 L6 13.5 H4 V11 H2 V13.5 H0 Z" transform="translate(-0.3,0)"/></g>
<g fill="#666"><rect x="7" y="3.8" width="8" height="1.1"/><rect x="7" y="6.8" width="8" height="1.1"/><rect x="7" y="9.8" width="8" height="1.1"/><rect x="7" y="12.8" width="8" height="1.1"/></g></svg>
<svg style="position:absolute;left:545px;top:101px;" width="5" height="3" viewBox="0 0 5 3"><path d="M0 0 H5 L2.5 3 Z" fill="#666"/></svg>
<div style="position:absolute;left:559px;top:91px;width:1px;height:22px;background:#e1e1e1;"></div>
<svg style="position:absolute;left:566px;top:93px;" width="18" height="18" viewBox="0 0 18 18"><path d="M5.5 1.5 H8 V5 M8 2 L13 7 L8 12 L3 7 L8 2" stroke="#777" stroke-width="1" fill="#fff"/>
<path d="M13 5.5 Q16 6 15 10.5 Q13.5 9 13 7 Z" fill="#3c78c0"/>
<rect x="1.5" y="13" width="15" height="3.5" fill="#fff" stroke="#777" stroke-width="1"/></svg>
<svg style="position:absolute;left:589px;top:101px;" width="5" height="3" viewBox="0 0 5 3"><path d="M0 0 H5 L2.5 3 Z" fill="#666"/></svg>
<svg style="position:absolute;left:601px;top:94px;" width="16" height="16" viewBox="0 0 16 16"><g fill="#777"><path d="M1 1 H15" stroke="#777" stroke-width="1" stroke-dasharray="1 2"/></g>
<g stroke="#777" stroke-width="1" stroke-dasharray="1 2" fill="none"><path d="M1.5 1.5 H14.5 M1.5 5.5 H14.5 M1.5 9.5 H14.5 M1.5 1.5 V11 M8 1.5 V11 M14.5 1.5 V11"/></g>
<rect x="1" y="13" width="14" height="1.2" fill="#777"/></svg>
<svg style="position:absolute;left:623px;top:101px;" width="5" height="3" viewBox="0 0 5 3"><path d="M0 0 H5 L2.5 3 Z" fill="#666"/></svg>
<svg style="position:absolute;left:634px;top:130px;" width="8" height="8" viewBox="0 0 8 8"><path d="M0.5 7 V0.5 H7" stroke="#777" stroke-width="1" fill="none"/><path d="M3 3 L7.5 7.5 M7.5 4 V7.5 H4" stroke="#777" stroke-width="1.1" fill="none"/></svg>
<div style="position:absolute;left:651px;top:55px;width:593px;height:60px;background:#fff;border:1px solid #c6c6c6;box-sizing:border-box;"></div>
<div style="position:absolute;left:724px;top:57px;width:72px;height:56px;border:4px solid #c5d7ef;box-sizing:border-box;"></div>
<div style='position:absolute;left:652px;top:58px;width:576px;height:54px;overflow:hidden'><div style='position:absolute;left:-652px;top:-58px;width:1366px;height:200px'>
<div class='t ' style='left:659.00px;top:67.74px;font-size:19.30px;color:#7f6000;font-family:"Liberation Serif", serif;letter-spacing:-0.120px;-webkit-text-stroke:0.2px #7f6000;'>AaBbC</div>
<div class='t ' style='left:663.10px;top:96.14px;font-size:12.00px;color:#555;font-family:"Liberation Sans", sans-serif;letter-spacing:-0.019px;'>¶ Normal</div>
<div style='position:absolute;left:728px;top:61px;width:61px;height:48px;overflow:hidden'><div style='position:absolute;left:-728px;top:-61px;width:1366px;height:200px'>
<div class='t ' style='left:731.20px;top:59.59px;font-size:29.50px;color:#5f5300;font-family:"Liberation Serif", serif;transform:scaleX(1.0843);transform-origin:0 0;-webkit-text-stroke:0.15px #5f5300;'>AA</div>
<div style="position:absolute;left:781px;top:64px;width:3.2px;height:20px;background:#5f5300;"></div>
<div style="position:absolute;left:778px;top:82.6px;width:11px;height:1.4px;background:#5f5300;"></div>
<div style="position:absolute;left:779px;top:63.8px;width:5.2px;height:1.2px;background:#5f5300;"></div>
<div style="position:absolute;left:784px;top:71px;width:5px;height:1.3px;background:#5f5300;"></div>
</div></div>
<div class='t ' style='left:749.20px;top:96.14px;font-size:12.00px;color:#444;font-family:"Liberation Sans", sans-serif;letter-spacing:-0.085px;'>Title</div>
<div style='position:absolute;left:796px;top:58px;width:65px;height:40px;overflow:hidden'><div style='position:absolute;left:-796px;top:-58px;width:1366px;height:200px'>
<div class='t ' style='left:802.90px;top:67.89px;font-size:19.00px;color:#111;font-family:"Liberation Serif", serif;transform:scaleX(0.9471);transform-origin:0 0;-webkit-text-stroke:0.25px #111;'>AABBCC</div>
</div></div>
<div class='t ' style='left:801.80px;top:96.14px;font-size:12.00px;color:#555;font-family:"Liberation Sans", sans-serif;transform:scaleX(0.9421);transform-origin:0 0;'>¶ Certifica...</div>
<div style='position:absolute;left:868px;top:64px;width:72px;height:30px;overflow:hidden'><div style='position:absolute;left:-868px;top:-64px;width:1366px;height:200px'>
<div class='t ' style='left:875.00px;top:54.49px;font-size:35.00px;color:#263238;font-family:"Liberation Serif", serif;transform:scaleX(1.2987);transform-origin:0 0;-webkit-text-stroke:0.3px #263238;'>Aa</div>
</div></div>
<div class='t ' style='left:877.70px;top:96.14px;font-size:12.00px;color:#555;font-family:"Liberation Sans", sans-serif;transform:scaleX(0.9450);transform-origin:0 0;'>Heading 1</div>
<div class='t ' style='left:946.50px;top:68.89px;font-size:17.80px;color:#a9472d;font-family:"Liberation Serif", serif;transform:scaleX(0.9592);transform-origin:0 0;-webkit-text-stroke:0.2px #a9472d;'>AaBbCc</div>
<div class='t ' style='left:949.30px;top:96.14px;font-size:12.00px;color:#555;font-family:"Liberation Sans", sans-serif;letter-spacing:-0.112px;'>Heading 2</div>
<div class='t ' style='left:1019.20px;top:67.64px;font-size:19.30px;color:#000;font-family:"Liberation Serif", serif;letter-spacing:-0.200px;-webkit-text-stroke:0.3px #000;'>AaBbC</div>
<div class='t ' style='left:1036.50px;top:96.14px;font-size:12.00px;color:#555;font-family:"Liberation Sans", sans-serif;transform:scaleX(0.9271);transform-origin:0 0;'>Date</div>
<div class='t ' style='left:1090.60px;top:70.27px;font-size:15.80px;color:#000;font-family:"Liberation Serif", serif;letter-spacing:-0.182px;-webkit-text-stroke:0.25px #000;'>AaBbCcI</div>
<div class='t ' style='left:1095.30px;top:96.14px;font-size:12.00px;color:#555;font-family:"Liberation Sans", sans-serif;transform:scaleX(0.9636);transform-origin:0 0;'>Signature</div>
<div class='t ' style='left:1163.30px;top:67.64px;font-size:19.30px;color:#595959;font-family:"Liberation Serif", serif;letter-spacing:-0.140px;'>AaBbC</div>
<div style="position:absolute;left:1163px;top:85.5px;width:58px;height:1px;background:#595959;"></div>
<div class='t ' style='left:1161.00px;top:96.14px;font-size:12.00px;color:#555;font-family:"Liberation Sans", sans-serif;transform:scaleX(0.9409);transform-origin:0 0;'>Subtle Em...</div>
</div></div>
<div style="position:absolute;left:1229px;top:55px;width:1px;height:60px;background:#dcdcdc;"></div>
<div style="position:absolute;left:1229px;top:76px;width:15px;height:1px;background:#e3e3e3;"></div>
<div style="position:absolute;left:1229px;top:97px;width:15px;height:1px;background:#e3e3e3;"></div>
<svg style="position:absolute;left:1233px;top:64px;" width="8" height="4" viewBox="0 0 8 4"><path d="M0 4 L3.5 0.5 L7 4 Z" fill="#c6c6c6"/></svg>
<svg style="position:absolute;left:1233px;top:85px;" width="8" height="4" viewBox="0 0 8 4"><path d="M0 0 H7 L3.5 3.5 Z" fill="#c6c6c6"/></svg>
<svg style="position:absolute;left:1232px;top:101px;" width="10" height="10" viewBox="0 0 10 10"><rect x="1" y="1" width="8" height="1.1" fill="#666"/><path d="M1.5 4.5 H8.5 L5 8 Z" fill="#666"/></svg>
<svg style="position:absolute;left:1240px;top:130px;" width="8" height="8" viewBox="0 0 8 8"><path d="M0.5 7 V0.5 H7" stroke="#777" stroke-width="1" fill="none"/><path d="M3 3 L7.5 7.5 M7.5 4 V7.5 H4" stroke="#777" stroke-width="1.1" fill="none"/></svg>
<svg style="position:absolute;left:1258px;top:55px;" width="18" height="16" viewBox="0 0 18 16"><g fill="#666"><rect x="1" y="6" width="6.5" height="8.5" rx="1"/><rect x="9.5" y="6" width="6.5" height="8.5" rx="1"/>
<rect x="2.5" y="1" width="3.5" height="6"/><rect x="11" y="1" width="3.5" height="6"/><rect x="6" y="6.5" width="5" height="3.5"/></g>
<g fill="#fff"><rect x="2.3" y="10" width="1.2" height="3.5"/><rect x="10.8" y="10" width="1.2" height="3.5"/></g></svg>
<div class='t ' style='left:1279.00px;top:58.04px;font-size:12.00px;color:#333;font-family:"Liberation Sans", sans-serif;transform:scaleX(0.9210);transform-origin:0 0;'>Find</div>
<svg style="position:absolute;left:1311px;top:62px;" width="5" height="3" viewBox="0 0 5 3"><path d="M0 0 H5 L2.5 3 Z" fill="#666"/></svg>
<svg style="position:absolute;left:1258px;top:78px;" width="19" height="17" viewBox="0 0 19 17"><text x="0.5" y="7.5" font-family="Liberation Sans" font-size="9" fill="#555">a</text><text x="6.5" y="7.5" font-family="Liberation Sans" font-size="9" fill="#aaa">b</text>
<text x="3.5" y="15.5" font-family="Liberation Sans" font-size="11" fill="#3c78c0">ac</text>
<path d="M1.2 9 V13 H3.3 M2.3 11.8 L3.5 13 L2.3 14.2" stroke="#3c78c0" stroke-width="1" fill="none"/></svg>
<div class='t ' style='left:1278.00px;top:80.84px;font-size:12.00px;color:#333;font-family:"Liberation Sans", sans-serif;transform:scaleX(0.9358);transform-origin:0 0;'>Replace</div>
<svg style="position:absolute;left:1262px;top:101px;" width="11" height="16" viewBox="0 0 11 16"><path d="M1 1 L9.5 9.5 H6 L8 14 L6.2 14.8 L4.2 10.3 L1 12.8 Z" fill="#fff" stroke="#666" stroke-width="1"/></svg>
<div class='t ' style='left:1278.00px;top:103.34px;font-size:12.00px;color:#333;font-family:"Liberation Sans", sans-serif;transform:scaleX(0.9355);transform-origin:0 0;'>Select</div>
<svg style="position:absolute;left:1312px;top:108px;" width="5" height="3" viewBox="0 0 5 3"><path d="M0 0 H5 L2.5 3 Z" fill="#666"/></svg>
<svg style="position:absolute;left:1346px;top:131px;" width="11" height="7" viewBox="0 0 11 7"><path d="M1 6 L5.5 1.5 L10 6" stroke="#555" stroke-width="1.6" fill="none"/></svg>
<svg style="position:absolute;left:1319px;top:34px;" width="7" height="4" viewBox="0 0 7 4"><path d="M0 0 H6 L3 3 Z" fill="#666"/></svg>
<svg style="position:absolute;left:1332px;top:24px;" width="24" height="24" viewBox="0 0 24 24"><rect x="0" y="0" width="24" height="24" fill="#ababab"/>
<circle cx="12" cy="8.6" r="4.6" fill="#fff"/><path d="M3.5 24 V19.5 Q3.5 14.5 9 14 L12 15.3 L15 14 Q20.5 14.5 20.5 19.5 V24 Z" fill="#fff"/></svg>
<svg style="position:absolute;left:229px;top:162px;" width="11" height="6" viewBox="0 0 11 6"><path d="M0.5 0.5 H10 L5.25 5.5 Z" fill="#666"/></svg>
<svg style="position:absolute;left:246px;top:159px;" width="12" height="12" viewBox="0 0 12 12"><path d="M1.5 1.5 L10.5 10.5 M10.5 1.5 L1.5 10.5" stroke="#666" stroke-width="2"/></svg>
<svg style="position:absolute;left:219px;top:199px;" width="15" height="16" viewBox="0 0 15 16"><circle cx="9" cy="6" r="4" fill="none" stroke="#3c78c0" stroke-width="1.7"/><path d="M6.2 8.8 L1.5 13.5" stroke="#3c78c0" stroke-width="2.2" stroke-linecap="round"/></svg>
<svg style="position:absolute;left:240px;top:205px;" width="7" height="4" viewBox="0 0 7 4"><path d="M0 0 H5.5 L2.75 3 Z" fill="#666"/></svg>
<svg style="position:absolute;left:128px;top:269px;" width="10" height="9" viewBox="0 0 10 9"><rect x="0.5" y="0.5" width="8" height="1.1" fill="#444"/><path d="M0.5 7.5 L4.5 3 L8.5 7.5 Z" fill="#444"/></svg>
<div style="position:absolute;left:1350px;top:144px;width:15px;height:15px;background:#fff;border:1px solid #ababab;box-sizing:border-box;"></div>
<svg style="position:absolute;left:1353px;top:149px;" width="9" height="5" viewBox="0 0 9 5"><path d="M0.5 4.5 L4.5 0.5 L8.5 4.5 Z" fill="#666"/></svg>
<div style="position:absolute;left:1350px;top:161px;width:15px;height:502px;background:#fff;border:1px solid #ababab;box-sizing:border-box;"></div>
<div style="position:absolute;left:1350px;top:663px;width:15px;height:25px;background:#e8e8e8;"></div>
<div style="position:absolute;left:1350px;top:688px;width:15px;height:15px;background:#fff;border:1px solid #ababab;box-sizing:border-box;"></div>
<svg style="position:absolute;left:1353px;top:694px;" width="9" height="5" viewBox="0 0 9 5"><path d="M0.5 0.5 H8.5 L4.5 4.5 Z" fill="#666"/></svg>
<svg style="position:absolute;left:163px;top:708px;" width="18" height="15" viewBox="0 0 18 15"><path d="M1 1.5 H7 Q8.5 1.5 8.5 3 V13 Q8.5 12 7 12 H1 Z" fill="none" stroke="#fff" stroke-width="1.1"/>
<path d="M8.5 3 Q8.5 1.5 10 1.5 H11" fill="none" stroke="#fff" stroke-width="1.1"/><path d="M8.5 13 V6" stroke="#fff" stroke-width="1.1"/>
<path d="M10 10.5 L15.5 2.5 L17 3.8 L11.5 11.5 L9.5 12.3 Z" fill="none" stroke="#fff" stroke-width="1.1"/></svg>
<div style="position:absolute;left:1112px;top:705px;width:38px;height:22px;background:#214a87;"></div>
<svg style="position:absolute;left:1085px;top:708px;" width="16" height="15" viewBox="0 0 16 15"><path d="M1 1.5 H6.5 L7.5 2.5 L8.5 1.5 H14 V12.5 H8.5 L7.5 13.5 L6.5 12.5 H1 Z" fill="none" stroke="#fff" stroke-width="1.1"/>
<path d="M7.5 2.5 V13.5" stroke="#fff" stroke-width="1"/><g stroke="#fff" stroke-width="1"><path d="M3 4.5 H5.5 M3 6.5 H5.5 M3 8.5 H5.5 M3 10.5 H5.5 M9.5 4.5 H12 M9.5 6.5 H12 M9.5 8.5 H12 M9.5 10.5 H12"/></g></svg>
<svg style="position:absolute;left:1123px;top:709px;" width="15" height="13" viewBox="0 0 15 13"><g fill="#fff"><rect x="0" y="0" width="15" height="1.2"/><rect x="0" y="11.8" width="15" height="1.2"/><rect x="0" y="0" width="1.2" height="13"/><rect x="13.8" y="0" width="1.2" height="13"/>
<rect x="2.5" y="3" width="10" height="1"/><rect x="2.5" y="5" width="10" height="1"/><rect x="2.5" y="7" width="10" height="1"/><rect x="2.5" y="9" width="10" height="1"/></g></svg>
<svg style="position:absolute;left:1161px;top:708px;" width="17" height="15" viewBox="0 0 17 15"><g fill="#fff"><rect x="1" y="1" width="12" height="1.1"/><rect x="1" y="1" width="1.1" height="12"/><rect x="1" y="12" width="7" height="1.1"/><rect x="12" y="1" width="1.1" height="5"/>
<rect x="3" y="4" width="7" height="1"/><rect x="3" y="6" width="6" height="1"/><rect x="3" y="8" width="4" height="1"/><rect x="3" y="10" width="4" height="1"/></g>
<circle cx="12.5" cy="11" r="4.2" fill="#fff"/><path d="M10 9 Q12 10 11.5 12.5 Q13.5 12 14.5 14 M13 7.2 Q13.5 9 15.8 9.5" stroke="#2b579a" stroke-width="1.1" fill="none"/></svg>
<div style="position:absolute;left:1193px;top:714.5px;width:6px;height:2px;background:#fff;"></div>
<div style="position:absolute;left:1203px;top:715px;width:100px;height:1px;background:#fff;"></div>
<div style="position:absolute;left:1236px;top:709px;width:4px;height:12px;background:#fff;"></div>
<div style="position:absolute;left:1253px;top:712px;width:1px;height:7px;background:#fff;"></div>
<div style="position:absolute;left:1307px;top:714.5px;width:8px;height:2px;background:#fff;"></div>
<div style="position:absolute;left:1310px;top:711.5px;width:2px;height:8px;background:#fff;"></div>
</body></html>
